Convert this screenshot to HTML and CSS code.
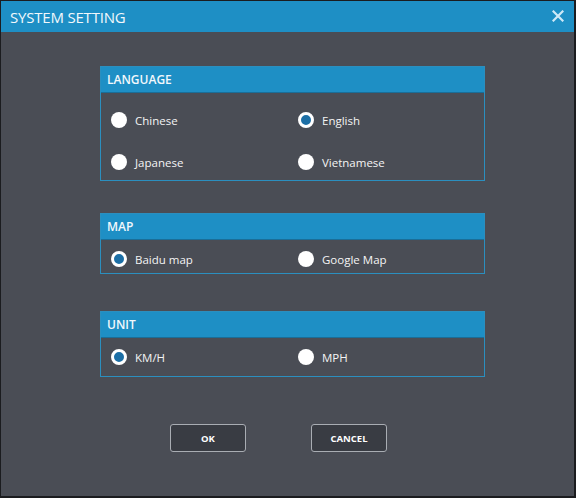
FILE: index.html
```html
<!DOCTYPE html>
<html>
<head>
<meta charset="utf-8">
<link rel="stylesheet" href="styles.css">
</head>
<body>
<div class="window">
  <div class="titlebar">
    <span class="title">SYSTEM SETTING</span>
    <svg class="close" width="12" height="12" viewBox="0 0 12 12"><path d="M1.5 1.5 L10.5 10.5 M10.5 1.5 L1.5 10.5" stroke="#cfe9f7" stroke-width="2.2" stroke-linecap="square"/></svg>
  </div>
  <div class="content">
    <div class="panel lang">
      <div class="panel-head">LANGUAGE</div>
      <div class="panel-body grid2">
        <label class="opt"><span class="radio"></span>Chinese</label>
        <label class="opt"><span class="radio on"></span>English</label>
        <label class="opt"><span class="radio"></span>Japanese</label>
        <label class="opt"><span class="radio"></span>Vietnamese</label>
      </div>
    </div>
    <div class="panel map">
      <div class="panel-head">MAP</div>
      <div class="panel-body grid2">
        <label class="opt"><span class="radio on"></span>Baidu map</label>
        <label class="opt"><span class="radio"></span>Google Map</label>
      </div>
    </div>
    <div class="panel unit">
      <div class="panel-head">UNIT</div>
      <div class="panel-body grid2">
        <label class="opt"><span class="radio on"></span>KM/H</label>
        <label class="opt"><span class="radio"></span>MPH</label>
      </div>
    </div>
    <div class="buttons">
      <button class="btn">OK</button>
      <button class="btn">CANCEL</button>
    </div>
  </div>
</div>
</body>
</html>
```
FILE: styles.css
```css
html, body {
  margin: 0;
  padding: 0;
  background: #4a4d55;
}
.window {
  width: 576px;
  height: 498px;
  box-sizing: border-box;
  border-style: solid;
  border-color: #1b1c1f;
  border-width: 1px 2px 2px 1px;
  background: #4a4d55;
  font-family: "Open Sans", "Noto Sans", sans-serif;
  color: #ffffff;
}
.titlebar {
  height: 31px;
  background: #1e8fc5;
  display: flex;
  align-items: center;
  justify-content: space-between;
  padding: 0 10px 0 9px;
}
.title {
  font-size: 15px;
  color: #f2f8fc;
  letter-spacing: -0.2px;
}
.close {
  display: block;
  margin-top: -1px;
}
.content {
  padding: 34px 0 0 99px;
}
.panel {
  width: 385px;
  box-sizing: border-box;
  border: 1px solid #2b8fbf;
}
.panel-head {
  height: 25px;
  background: #1e8fc5;
  font-size: 12px;
  font-weight: 600;
  line-height: 25px;
  padding-left: 6px;
  color: #f2f8fc;
}
.panel-body {
  border-top: 1px solid #1a6e98;
}
.grid2 {
  display: grid;
  grid-template-columns: 187px 1fr;
  padding: 11px 0 6px 10px;
  row-gap: 26px;
}
.lang .panel-body {
  padding: 19px 0 10px 10px;
}
.unit .panel-body {
  padding: 11px 0 11px 10px;
}
.map { margin-top: 32px; }
.unit { margin-top: 37px; }
.opt {
  display: flex;
  align-items: center;
  height: 16px;
  font-size: 11.5px;
  color: #f4f4f4;
}
.radio {
  width: 16px;
  height: 16px;
  border-radius: 50%;
  background: #ffffff;
  margin-right: 8px;
  box-sizing: border-box;
  flex: none;
}
.radio.on {
  background: #1c6fa6;
  border: 3px solid #ffffff;
}
.buttons {
  display: flex;
  gap: 65px;
  padding: 47px 0 0 70px;
}
.btn {
  width: 76px;
  height: 28px;
  box-sizing: border-box;
  background: #393c43;
  border: 1px solid #a9adb3;
  border-radius: 3px;
  color: #ffffff;
  font-family: "Open Sans", "Noto Sans", sans-serif;
  font-weight: 700;
  font-size: 9.5px;
  padding: 0;
}
```
